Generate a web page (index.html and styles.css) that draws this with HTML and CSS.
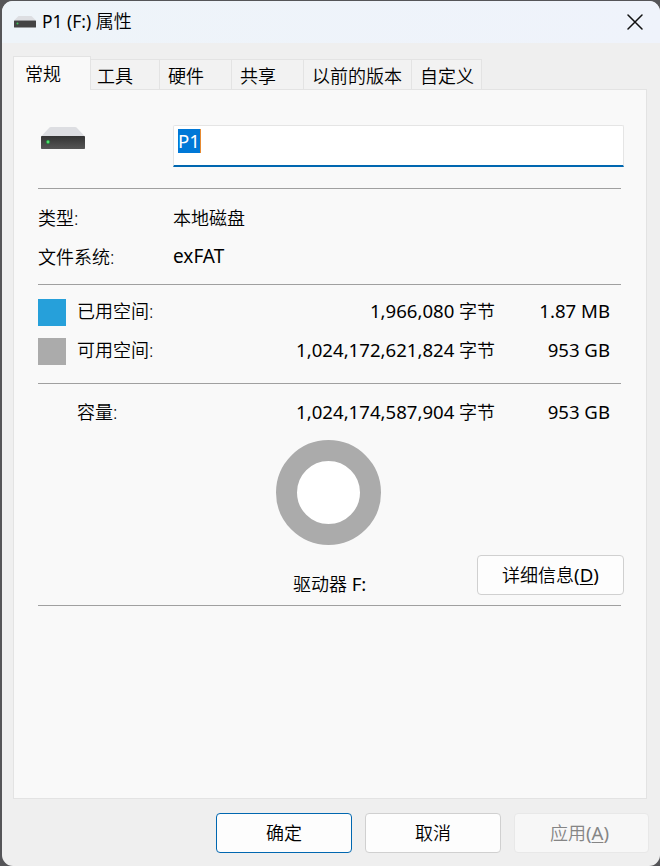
FILE: index.html
```
<!DOCTYPE html>
<html lang="zh-CN">
<head>
    <meta charset="UTF-8">
    <meta name="viewport" content="width=device-width, initial-scale=1.0">
    <title>P1 (F:) 属性</title>
    <link rel="stylesheet" href="styles.css">
</head>
<body>
    <div class="window">
        <header class="titlebar">
            <svg class="title-icon" width="22" height="12" viewBox="0 0 44 24" preserveAspectRatio="none">
                <path d="M9 0h26l9 9H0z" fill="#dddee2"/>
                <rect y="9" width="44" height="14" rx="1" fill="#444"/>
                <circle cx="7" cy="15" r="2" fill="#3fc45b"/>
            </svg>
            <h1 class="title"><span class="latin">P1 (F:)</span> 属性</h1>
            <button class="close-btn" aria-label="关闭">
                <svg width="16" height="16" viewBox="0 0 16 16">
                    <path d="M1 1l14 14M15 1L1 15" fill="none" stroke="#111" stroke-width="1.5" stroke-linecap="round"/>
                </svg>
            </button>
        </header>

        <nav class="tabs">
            <a class="tab active">常规</a>
            <a class="tab tab-tools">工具</a>
            <a class="tab">硬件</a>
            <a class="tab">共享</a>
            <a class="tab tab-versions">以前的版本</a>
            <a class="tab tab-custom">自定义</a>
        </nav>

        <main class="panel">
            <section class="name-section">
                <svg class="drive-icon" width="44" height="23" viewBox="0 0 44 23">
                    <defs>
                        <linearGradient id="front" x1="0" y1="0" x2="0" y2="1">
                            <stop offset="0" stop-color="#343434"/>
                            <stop offset="1" stop-color="#565656"/>
                        </linearGradient>
                    </defs>
                    <path d="M8 1Q8.500 0 10 0h24q1.500 0 2 1l8 8.500H0z" fill="#dddee2"/>
                    <rect y="9" width="44" height="13" rx="0.800" fill="url(#front)"/>
                    <circle cx="7" cy="15" r="2.200" fill="#247a38"/>
                    <circle cx="7" cy="15" r="1.400" fill="#4fe070"/>
                </svg>
                <div class="name-input"><span class="selection latin">P1</span></div>
            </section>

            <section class="info-section">
                <div class="info-row"><span class="label">类型:</span><span>本地磁盘</span></div>
                <div class="info-row"><span class="label">文件系统:</span><span class="latin">exFAT</span></div>
            </section>

            <section class="space-section">
                <div class="space-row">
                    <i class="swatch used"></i>
                    <span>已用空间:</span>
                    <span class="bytes"><span class="latin">1,966,080</span> 字节</span>
                    <span class="size latin">1.87 MB</span>
                </div>
                <div class="space-row">
                    <i class="swatch free"></i>
                    <span>可用空间:</span>
                    <span class="bytes"><span class="latin">1,024,172,621,824</span> 字节</span>
                    <span class="size latin">953 GB</span>
                </div>
            </section>

            <section class="capacity-section">
                <div class="space-row">
                    <i></i>
                    <span>容量:</span>
                    <span class="bytes"><span class="latin">1,024,174,587,904</span> 字节</span>
                    <span class="size latin">953 GB</span>
                </div>
                <div class="chart"></div>
                <div class="drive-row">
                    <span class="drive-name">驱动器 <span class="latin">F:</span></span>
                    <button class="btn btn-details">详细信息<span class="latin">(<u>D</u>)</span></button>
                </div>
            </section>
        </main>

        <footer class="actions">
            <button class="btn btn-primary">确定</button>
            <button class="btn">取消</button>
            <button class="btn btn-apply" disabled>应用<span class="latin">(<u>A</u>)</span></button>
        </footer>
    </div>
</body>
</html>
```
FILE: styles.css
```
:root {
    --window-bg: #efefef;
    --panel-bg: #f9f9f9;
    --border: #e3e3e3;
    --line: #a0a0a0;
    --accent: #0067b0;
    --used: #26a0da;
    --free: #ababab;
}

* {
    margin: 0;
    padding: 0;
    box-sizing: border-box;
}

body {
    height: 866px;
    padding: 1px 0 0 2px;
    background: #555558;
    font: 350 18px/24px "Noto Sans", "Noto Sans CJK SC", sans-serif;
    color: #000;
    overflow: hidden;
}

.window {
    width: 658px;
    height: 865px;
    border-radius: 11px;
    background: var(--window-bg);
    overflow: hidden;
}

.latin {
    font-size: 18.6px;
    font-weight: 400;
}

.titlebar {
    height: 42px;
    display: flex;
    align-items: center;
    padding: 0 17px 0 12px;
    background: linear-gradient(90deg, #eef4f9, #eff3fb);
}

.title {
    flex: 1;
    margin: -2px 0 0 6px;
    font-size: 18px;
    font-weight: inherit;
}

.title .latin {
    font-size: 17.4px;
}

.close-btn {
    width: 16px;
    height: 16px;
    border: none;
    background: none;
}

.close-btn svg {
    display: block;
}

.tabs {
    height: 46px;
    display: flex;
    align-items: flex-end;
    padding-left: 11px;
}

.tab {
    width: 72px;
    height: 30px;
    padding: 4px 0 0 8px;
    border: solid var(--border);
    border-width: 1px 1px 0 0;
    background: #f2f2f2;
    white-space: nowrap;
}

.tab.active {
    width: 78px;
    height: 34px;
    margin-bottom: -1px;
    padding: 5px 0 0 11px;
    border-left-width: 1px;
    background: var(--panel-bg);
    z-index: 1;
}

.tab.tab-tools {
    width: 69px;
    padding-left: 6px;
}

.tab-versions {
    width: 108px;
}

.tab-custom {
    width: 70px;
}

.panel {
    width: 634px;
    height: 710px;
    margin-left: 11px;
    padding: 0 25px 0 24px;
    border: 1px solid var(--border);
    background: var(--panel-bg);
}

.panel section {
    border-bottom: 1px solid var(--line);
}

.name-section {
    height: 99px;
    display: flex;
    align-items: flex-start;
}

.drive-icon {
    flex: none;
    margin: 37px 88px 0 3px;
}

.name-input {
    flex: none;
    width: 451px;
    height: 42px;
    margin-top: 35px;
    padding: 3px 4px;
    border: 1px solid #e5e5e5;
    border-bottom: 2px solid var(--accent);
    border-radius: 2px 2px 0 0;
    background: #fff;
}

.selection {
    display: inline-block;
    height: 24px;
    border-right: 1px solid #e68a32;
    background: #0078d7;
    color: #fff;
    line-height: 23px;
}

.info-section {
    height: 96px;
    padding-top: 9px;
}

.info-row {
    height: 39px;
    display: flex;
    align-items: center;
}

.info-row .latin {
    margin-top: -2px;
    font-size: 19px;
}

.label {
    width: 135px;
}

.space-section {
    height: 99px;
    padding-top: 8px;
}

.space-row {
    height: 39px;
    display: grid;
    grid-template-columns: 28px 100px 1fr 115px;
    align-items: center;
    padding-right: 11px;
}

.space-row > span {
    padding-bottom: 3px;
}

.space-row > span:nth-child(2) {
    padding-left: 11px;
    white-space: nowrap;
}

.swatch {
    height: 27px;
}

.used {
    background: var(--used);
}

.free {
    background: var(--free);
}

.bytes,
.size {
    text-align: right;
}

.capacity-section {
    height: 222px;
    padding-top: 10px;
}

.chart {
    width: 105px;
    height: 105px;
    margin: 7px 0 10px 238px;
    border: 21px solid var(--free);
    border-radius: 50%;
    background: #fff;
}

.drive-row {
    height: 40px;
    display: flex;
    justify-content: flex-end;
    margin-right: -3px;
}

.drive-name {
    width: 184px;
    padding-top: 17px;
}

.actions {
    display: flex;
    justify-content: flex-end;
    gap: 13px;
    padding: 14px 11px 0 0;
}

.btn {
    width: 136px;
    height: 40px;
    border: 1px solid #d0d0d0;
    border-radius: 4px;
    background: #fdfdfd;
    color: #000;
    font: inherit;
}

.btn u {
    text-underline-offset: 2px;
    text-decoration-thickness: 1px;
}

.btn-details {
    width: 147px;
    padding-bottom: 1px;
}

.btn-primary {
    border-color: var(--accent);
}

.btn-apply {
    width: 135px;
    padding-right: 4px;
}

.btn:disabled {
    border-color: #e8e8e8;
    background: #f7f7f7;
    color: #858585;
}
```
